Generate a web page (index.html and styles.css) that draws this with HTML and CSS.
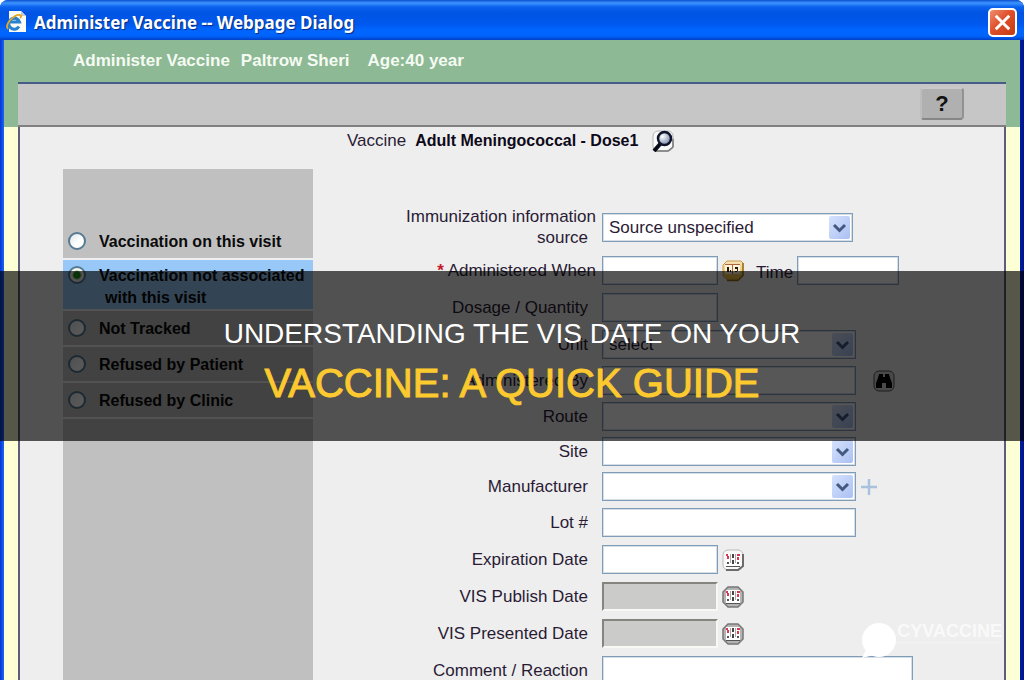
FILE: index.html
```html
<!DOCTYPE html>
<html lang="en">
<head>
<meta charset="utf-8">
<title>Administer Vaccine</title>
<link rel="stylesheet" href="styles.css">
</head>
<body>
<svg class="defs" aria-hidden="true">
  <defs>
    <linearGradient id="arrow-bg" x1="0" y1="0" x2="1" y2="1">
      <stop offset="0" stop-color="#d6e2fd"/><stop offset="1" stop-color="#aac0f3"/>
    </linearGradient>
    <radialGradient id="lens" cx=".35" cy=".35" r=".7">
      <stop offset="0" stop-color="#fff"/><stop offset="1" stop-color="#7687a8"/>
    </radialGradient>
    <linearGradient id="gold" x1="0" y1="0" x2="0" y2="1">
      <stop offset="0" stop-color="#f5e3bd"/><stop offset="1" stop-color="#edb830"/>
    </linearGradient>
    <symbol id="arrow" viewBox="0 0 21 23">
      <rect width="21" height="23" rx="2" fill="url(#arrow-bg)"/>
      <path d="M5 9l5.500 5.500L16 9" fill="none" stroke="#43597f" stroke-width="3"/>
    </symbol>
    <symbol id="digits" viewBox="0 0 22 22">
      <rect x="4" y="4" width="14" height="13" fill="#fff"/>
      <path d="M4 5h2v2H4zM5 7h2v3H5zM15 5h3v2h-3zM15 8h2v3h-2z" fill="#dc3550"/>
      <path d="M10 5h2v4h-2zM10 11h2v4h-2z" fill="#444"/>
      <path d="M8 5h1v9H8zM13 5h1v9h-1z" fill="#aaa"/>
      <path d="M5 13h2v2H5zM15 13h2v2h-2zM4 17h14v1H4z" fill="#555"/>
    </symbol>
  </defs>
</svg>

<div class="window">
  <header class="titlebar">
    <svg class="page-icon" viewBox="0 0 22 24" aria-hidden="true">
      <path d="M3 1h12l5 5v16H3z" fill="#fbfbf5"/>
      <path d="M15 1v5h5z" fill="#c4cbd6"/>
      <path d="M13 16.500a5.500 5.500 0 1 1 .5-4.500H4" fill="none" stroke="#2783cf" stroke-width="3"/>
      <path d="M2 19C-2 14 9 4 14 5c2 .5 1 2 0 3" fill="none" stroke="#e5a722" stroke-width="1.800"/>
    </svg>
    <h1 class="title">Administer Vaccine -- Webpage Dialog</h1>
    <button class="close" type="button" aria-label="Close">
      <svg viewBox="0 0 24 24"><path d="M5.500 5.500l13 13M18.500 5.500l-13 13" stroke="#fff" stroke-width="2.800" fill="none"/></svg>
    </button>
  </header>

  <div class="client">
    <div class="patient"><span>Administer Vaccine</span><span>Paltrow Sheri</span><span class="age">Age:40 year</span></div>
    <div class="toolbar-wrap">
      <div class="toolbar"><button class="help" type="button">?</button></div>
    </div>
    <form class="main-wrap">
      <div class="main">
        <div class="vaccine">
          <span>Vaccine</span><strong>Adult Meningococcal - Dose1</strong>
          <button class="icon-button" type="button" aria-label="Search vaccine">
            <svg viewBox="0 0 22 22">
              <rect x="1" y="1" width="20" height="20" rx="5" fill="#fafafa" stroke="#b5b5b5"/>
              <path d="M4 21h12l5-4V9" fill="none" stroke="#777" stroke-width="1.500"/>
              <path d="M9 13l-7 8" stroke="#080b18" stroke-width="4"/>
              <circle cx="12.500" cy="8.500" r="6.500" fill="url(#lens)" stroke="#10152b" stroke-width="2.500"/>
            </svg>
          </button>
        </div>
        <div class="columns">
          <div class="status" role="radiogroup" aria-label="Vaccination status">
            <label class="option"><input type="radio" name="status"><span>Vaccination on this visit</span></label>
            <label class="option selected"><input type="radio" name="status" checked><span>Vaccination not associated<span class="second">with this visit</span></span></label>
            <label class="option"><input type="radio" name="status"><span>Not Tracked</span></label>
            <label class="option"><input type="radio" name="status"><span>Refused by Patient</span></label>
            <label class="option"><input type="radio" name="status"><span>Refused by Clinic</span></label>
          </div>
          <div class="fields">
            <div class="row source">
              <label class="wide" for="source">Immunization information<span class="indent">source</span></label>
              <div class="control"><span class="select"><select id="source"><option>Source unspecified</option></select><svg><use href="#arrow"/></svg></span></div>
            </div>
            <div class="row">
              <label class="wide" for="when"><span class="required">*</span> Administered When</label>
              <div class="control">
                <input class="short" id="when" type="text">
                <button class="icon-button" type="button" aria-label="Choose administered date">
                  <svg viewBox="0 0 22 22"><path d="M5 1h14l2 2v12l-5 5H6l-5-4V5z" fill="url(#gold)" stroke="#c99a4a"/><path d="M5 20.500h11l5-5V3" fill="none" stroke="#94701f" stroke-width="1.500"/><rect x="3" y="4" width="15" height="10" fill="#fff3dc"/><path d="M3 4.500h15M10.500 4v10" stroke="#b0663a"/><path d="M5 7h2v5H5zM13 7h3v2h-3zM15 9h1v2h-1zM8 10h1v2H8zM13 11h2v1h-2z" fill="#241708"/></svg>
                </button>
                <label class="time-label" for="time">Time</label>
                <input class="time" id="time" type="text">
              </div>
            </div>
            <div class="row"><label for="dosage">Dosage / Quantity</label><div class="control"><input class="short" id="dosage" type="text"></div></div>
            <div class="row"><label for="unit">Unit</label><div class="control"><span class="select long"><select id="unit"><option>select</option></select><svg><use href="#arrow"/></svg></span></div></div>
            <div class="row snug"><label for="by">Administered By</label>
              <div class="control">
                <input class="long" id="by" type="text">
                <button class="icon-button find" type="button" aria-label="Find administrator">
                  <svg viewBox="0 0 22 22"><rect x="1" y="1" width="20" height="20" rx="5" fill="#d6d6d6" stroke="#555"/><path d="M6 4h4v3h2V4h4l1 4 2 5v5h-6v-5H9v5H3v-5l2-5z" fill="#000"/></svg>
                </button>
              </div>
            </div>
            <div class="row snug"><label for="route">Route</label><div class="control"><span class="select long"><select id="route"><option></option></select><svg><use href="#arrow"/></svg></span></div></div>
            <div class="row tight"><label for="site">Site</label><div class="control"><span class="select long"><select id="site"><option></option></select><svg><use href="#arrow"/></svg></span></div></div>
            <div class="row tight"><label for="manufacturer">Manufacturer</label>
              <div class="control">
                <span class="select long"><select id="manufacturer"><option></option></select><svg><use href="#arrow"/></svg></span>
                <button class="icon-button add" type="button" aria-label="Add manufacturer"><svg viewBox="0 0 18 18"><path d="M9 1v16M1 9h16" stroke="#a8c2dd" stroke-width="2.500"/></svg></button>
              </div>
            </div>
            <div class="row snug"><label for="lot">Lot #</label><div class="control"><input class="long" id="lot" type="text"></div></div>
            <div class="row"><label for="expires">Expiration Date</label>
              <div class="control"><input class="short" id="expires" type="text">
                <button class="icon-button" type="button" aria-label="Choose expiration date"><svg viewBox="0 0 22 22"><rect x="1" y="1" width="20" height="20" rx="5" fill="#f8f8f8" stroke="#bbb"/><path d="M4 21h12l5-4V5" fill="none" stroke="#6b6b6b" stroke-width="2"/><use href="#digits"/></svg></button></div>
            </div>
            <div class="row"><label for="published">VIS Publish Date</label>
              <div class="control"><input class="short" id="published" type="text" disabled>
                <button class="icon-button" type="button" aria-label="Choose publish date"><svg viewBox="0 0 22 22"><path d="M6 1h10l5 5v10l-5 5H6l-5-5V6z" fill="#b4b4b4" stroke="#777" stroke-width="1.500"/><use href="#digits"/></svg></button></div>
            </div>
            <div class="row"><label for="presented">VIS Presented Date</label>
              <div class="control"><input class="short" id="presented" type="text" disabled>
                <button class="icon-button" type="button" aria-label="Choose presented date"><svg viewBox="0 0 22 22"><path d="M6 1h10l5 5v10l-5 5H6l-5-5V6z" fill="#b4b4b4" stroke="#777" stroke-width="1.500"/><use href="#digits"/></svg></button></div>
            </div>
            <div class="row"><label for="comment">Comment / Reaction</label><div class="control"><textarea id="comment"></textarea></div></div>
          </div>
        </div>
      </div>
    </form>
  </div>
</div>

<div class="banner">
  <p class="banner-top">UNDERSTANDING THE VIS DATE ON YOUR</p>
  <p class="banner-main">VACCINE: A QUICK GUIDE</p>
</div>

<div class="watermark">
  <svg viewBox="0 0 36 38" aria-hidden="true"><circle cx="18" cy="18" r="17" fill="#fff"/><path d="M5 27l-4 9 12-3z" fill="#fff"/></svg>
  <div class="brand"><span>CYVACCINE</span><i class="rule"></i></div>
</div>
</body>
</html>
```

FILE: styles.css
```css
* { box-sizing: border-box; }

body {
  margin: 0;
  background: #fff;
  color: #2a1b35;
  font-family: "Liberation Sans", Arial, sans-serif;
  font-size: 17px;
}

input, select, textarea, button { font: inherit; color: inherit; margin: 0; }

.defs { position: absolute; width: 0; height: 0; }

.window {
  display: flex;
  flex-direction: column;
  height: 100vh;
  overflow: hidden;
  border-radius: 8px 8px 0 0;
  background: linear-gradient(90deg, #0831d9 0, #166aee 4px, #001ea0 calc(100% - 4px), #00138c 100%);
}

.titlebar {
  display: flex;
  flex: none;
  align-items: center;
  height: 40px;
  padding: 4px 7px 0 6px;
  background: linear-gradient(#0a4fcf 0, #3d95ff 3px, #0a62ee 7px, #0054e3 13px, #0058ee 24px, #0066ff 30px, #0064fb 36px, #0040c8 40px);
}

.page-icon { width: 22px; height: 24px; }

.title {
  flex: 1;
  margin: 0 0 0 6px;
  color: #fff;
  font: bold 17px "Noto Sans", sans-serif;
  text-shadow: 1px 1px 1px #0a2a80;
}

.close {
  width: 29px;
  height: 29px;
  padding: 0;
  border: 2px solid #fff;
  border-radius: 5px;
  background: linear-gradient(135deg, #ee8f71, #e0502b 45%, #c43a10);
}

.close svg { display: block; width: 25px; height: 25px; }

.client {
  display: flex;
  flex: 1;
  flex-direction: column;
  min-height: 0;
  margin: 0 4px;
}

.patient {
  flex: none;
  height: 42px;
  padding-left: 69px;
  background: #8db995;
  color: #f5fbf3;
  font-weight: bold;
  line-height: 42px;
}

.patient span { margin-right: 11px; }
.patient .age { margin-left: 7px; }

.toolbar-wrap { flex: none; padding: 0 14px; background: #8db995; }

.toolbar {
  display: flex;
  align-items: center;
  justify-content: flex-end;
  height: 45px;
  padding-right: 42px;
  border-top: 2px solid #475c86;
  border-bottom: 2px solid #808080;
  background: #c6c6c6;
}

.help {
  width: 44px;
  height: 33px;
  margin-bottom: 2px;
  padding: 0;
  border: 2px solid;
  border-color: #c9c9c9 #929292 #868686 #bdbdbd;
  border-radius: 4px;
  background: #b0b0b0;
  color: #111;
  font-size: 22px;
  font-weight: bold;
}

.main-wrap {
  display: flex;
  flex: 1;
  min-height: 0;
  padding: 0 14px;
  background: #fdffd5;
}

.main {
  display: flex;
  flex: 1;
  flex-direction: column;
  min-width: 0;
  border: solid #5d5c7d;
  border-width: 0 2px;
  background: #eee;
}

.vaccine {
  display: flex;
  flex: none;
  align-items: center;
  height: 28px;
  padding-left: 327px;
}

.vaccine strong { margin: 0 14px 0 9px; color: #0d0918; font-size: 16px; }

.icon-button { flex: none; padding: 0; border: 0; background: none; }
.icon-button svg { display: block; width: 22px; height: 22px; }
.find { margin-left: 13px; }
.add svg { width: 18px; height: 18px; }

.columns {
  display: grid;
  flex: 1;
  grid-template-columns: 250px 1fr;
  min-height: 0;
  margin: 14px 0 0 43px;
}

.status {
  padding-top: 55px;
  background: #c0c0c0;
  color: #0a0a0a;
  font-size: 16px;
  font-weight: bold;
  line-height: 22px;
}

.option {
  display: flex;
  gap: 13px;
  padding: 7px 0 5px 5px;
  border-bottom: 2px solid #f0f0f0;
  white-space: nowrap;
}

.option.selected { padding-top: 5px; padding-bottom: 0; background: #97c8f7; }
.second { display: block; padding-left: 6px; }

.option input {
  flex: none;
  width: 18px;
  height: 18px;
  margin-top: 1px;
  appearance: none;
  border: 2px solid #557a94;
  border-radius: 50%;
  background: linear-gradient(135deg, #dfe5e8, #fff 60%);
}

.option input:checked { background: radial-gradient(circle, #23a51f 0, #188a16 3px, #f4f4f0 5px); }

.fields { padding-top: 37px; }

.row {
  display: grid;
  grid-template-columns: 283px 1fr;
  column-gap: 6px;
  align-items: center;
  margin-top: 8px;
}

.row.source { margin-top: 0; margin-bottom: 8px; }
.row.snug { margin-top: 7px; }
.row.tight { margin-top: 6px; }

.row > label { padding-right: 8px; text-align: right; line-height: 21px; }
.row > .wide { padding-right: 0; }
.indent { display: block; padding-right: 8px; }
.required { color: #c31b2d; font-weight: bold; }

.control { display: flex; align-items: center; gap: 4px; }

.control input, .select select, .control textarea {
  height: 29px;
  padding: 0 6px;
  border: 1px solid #7f9db9;
  outline: 1px solid #d5dde5;
  outline-offset: -2px;
  border-radius: 0;
  background: #fff;
}

.control .short { width: 116px; }
.control .long { width: 254px; }
.control .time { width: 102px; }
.time-label { padding: 5px 0 0 8px; }

.control input:disabled {
  border: 2px solid;
  border-color: #85847e #f8f8f4 #f8f8f4 #85847e;
  outline: 0;
  background: #cbcbc9;
}

.control textarea { width: 311px; height: 64px; resize: none; }
.row:last-child { align-items: start; }
.row:last-child label { padding-top: 4px; }

.select { position: relative; width: 251px; }
.select select { width: 100%; appearance: none; }
.select svg {
  position: absolute;
  top: 3px;
  right: 3px;
  width: 21px;
  height: 23px;
  pointer-events: none;
}

.banner {
  position: absolute;
  top: 271px;
  right: 0;
  left: 0;
  height: 170px;
  padding-top: 41px;
  background: rgba(0, 0, 0, 0.66);
  text-align: center;
}

.banner p { margin: 0; }
.banner-top { color: #fff; font-size: 28px; line-height: 44px; }
.banner-main {
  color: #fcc92f;
  font-size: 40px;
  line-height: 54px;
  -webkit-text-stroke: 1px #fcc92f;
}

.watermark {
  position: absolute;
  right: 22px;
  bottom: 20px;
  display: flex;
  color: #fff;
}

.watermark svg { width: 36px; height: 38px; }
.brand { font-size: 18px; font-weight: bold; line-height: 18px; }
.brand span { opacity: 0.7; }
.rule { display: block; height: 1px; margin-top: 2px; background: #f3f3f3; }
```
